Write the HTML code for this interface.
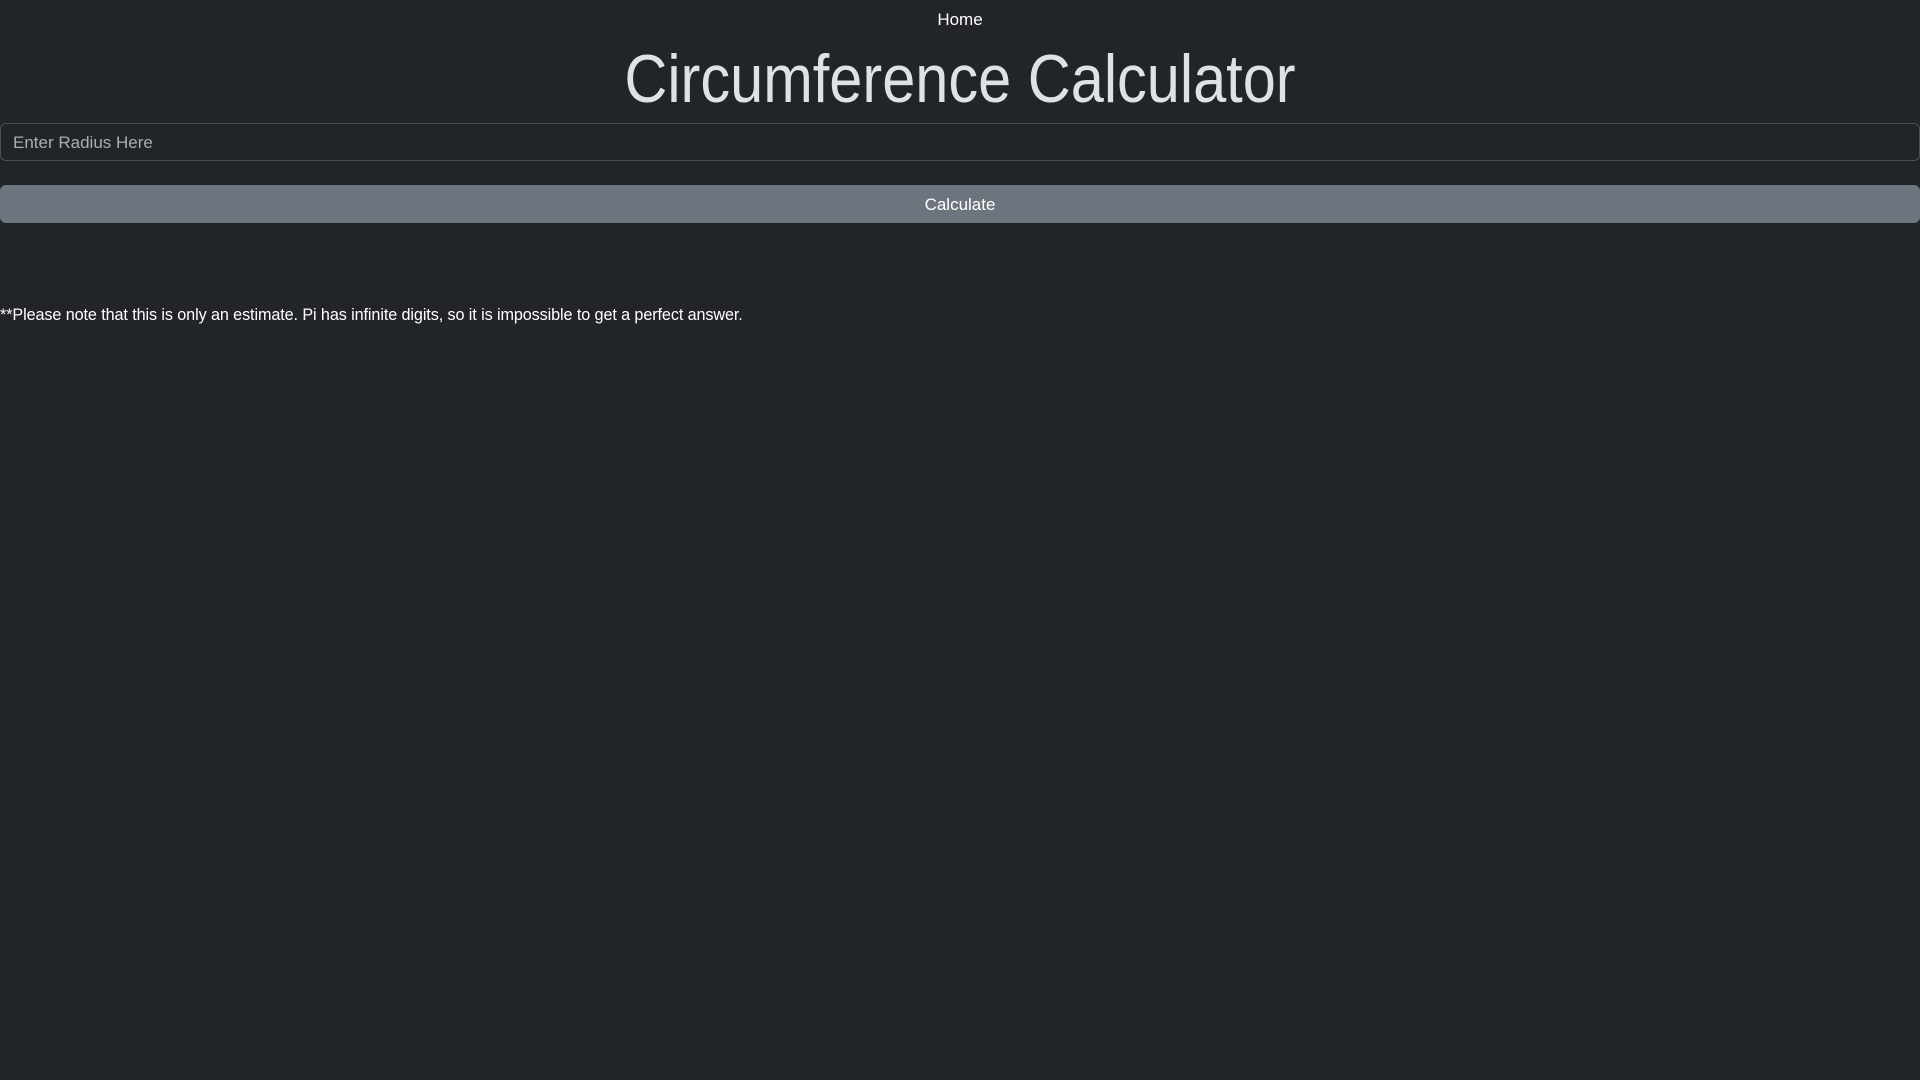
<!DOCTYPE html>
<html><head><meta charset="utf-8"><style>
html,body{margin:0;padding:0;background:#212529;width:1920px;height:1080px;overflow:hidden;font-family:"Liberation Sans",sans-serif;color:#dee2e6}
.home{position:absolute;top:10px;left:0;width:1920px;text-align:center;font-size:17px;color:#fff}
h1{position:absolute;top:36px;left:0;width:1920px;margin:0;text-align:center;font-weight:300;font-size:68px;line-height:86px;color:#dee2e6;transform:scaleX(0.875);transform-origin:960px 0}
.inp{position:absolute;top:123px;left:0;width:1920px;border:1.5px solid #495057;border-radius:6px;box-sizing:border-box;height:38px}
.inp span{position:absolute;left:12px;top:9px;font-size:17px;color:#a8adb3}
.btn{position:absolute;top:185px;left:0;width:1920px;height:38px;background:#6c757d;border-radius:6px;color:#fff;text-align:center;line-height:40px;font-size:17px}
.note{position:absolute;top:306px;left:0;font-size:16.2px;color:#fff;letter-spacing:-0.1px}
</style></head><body>
<div class="home">Home</div>
<h1>Circumference Calculator</h1>
<div class="inp"><span>Enter Radius Here</span></div>
<div class="btn">Calculate</div>
<div class="note">**Please note that this is only an estimate. Pi has infinite digits, so it is impossible to get a perfect answer.</div>
</body></html>
